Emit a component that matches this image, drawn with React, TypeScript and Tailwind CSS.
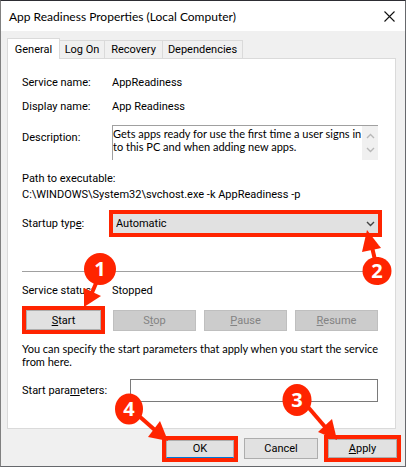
import type { ReactNode } from "react";
import clsx from "clsx";

type MarkerProps = {
  className: string;
  step: string;
  width: number;
  height: number;
  cx: number;
  cy: number;
  rx: number;
  ry: number;
  head: string;
  stem: string;
};

// Numbered callout: a disc with an arrow that points at the control
function Marker({ className, step, width, height, cx, cy, rx, ry, head, stem }: MarkerProps) {
  return (
    <svg
      className={clsx("pointer-events-none absolute z-10 max-w-none overflow-visible", className)}
      width={width}
      height={height}
      viewBox={`0 0 ${width} ${height}`}
      fill="#ff2400"
    >
      <path d={stem} stroke="#ff2400" strokeWidth="4" />
      <path d={head} />
      <ellipse cx={cx} cy={cy} rx={rx} ry={ry} />
      <text
        x={cx}
        y={cy + 7}
        textAnchor="middle"
        fill="#fff"
        className="font-['Open_Sans',sans-serif] text-[20px] font-bold"
      >
        {step}
      </text>
    </svg>
  );
}

const TABS = [
  { label: "Log On", width: "w-[45px]" },
  { label: "Recovery", width: "w-[58px]" },
  { label: "Dependencies", width: "w-[80px]" },
];

function Chevron({ up = false, className }: { up?: boolean; className?: string }) {
  return (
    <svg className={className} width="9" height="6" viewBox="0 0 9 6" fill="none" stroke="currentColor">
      <path d={up ? "M1 5L4.500 1.500L8 5" : "M1 1L4.500 4.500L8 1"} strokeWidth="1.400" />
    </svg>
  );
}

function Button({ children, disabled, className }: { children: ReactNode; disabled?: boolean; className?: string }) {
  return (
    <button
      type="button"
      disabled={disabled}
      className={clsx(
        "w-full border text-center",
        disabled ? "border-[#bfbfbf] bg-[#cccccc] text-[#838383]" : "border-[#adadad] bg-[#e1e1e1]",
        className,
      )}
    >
      {children}
    </button>
  );
}

export default function App() {
  return (
    <main className="border border-t-[#2d2d33] border-r-[#66686c] border-b-[#66686c] border-l-[#808080] bg-[#f0f0f0] font-[Roboto,Arial,sans-serif] text-[11px] leading-[13px] text-black">
      <header className="flex h-[30px] items-center justify-between bg-white pr-[10px] pl-2">
        <h1 className="font-[Lato,sans-serif] text-[12px]">App Readiness Properties (Local Computer)</h1>
        <button type="button" aria-label="Close">
          <svg width="11" height="11" viewBox="0 0 11 11" stroke="#111" strokeWidth="1.100">
            <path d="M.5.5l10 10M10.500.5l-10 10" />
          </svg>
        </button>
      </header>

      <div className="px-[6px] pt-[7px] pr-[9px]">
        <nav role="tablist" className="flex items-end">
          <button
            type="button"
            role="tab"
            aria-selected="true"
            className="relative -mb-px h-[21px] w-[53px] border border-b-0 border-[#dadada] bg-white"
          >
            General
          </button>
          {TABS.map((tab) => (
            <button
              key={tab.label}
              type="button"
              role="tab"
              aria-selected="false"
              className={clsx("h-[18px] border-t border-r border-[#dadada]", tab.width)}
            >
              {tab.label}
            </button>
          ))}
        </nav>

        <section className="border border-[#dadada] bg-white pt-[17px] pr-[17px] pb-[26px] pl-[14px]">
          <dl className="grid grid-cols-[90px_1fr] gap-y-[11px]">
            <dt>Service name:</dt>
            <dd>AppReadiness</dd>
            <dt>Display name:</dt>
            <dd>App Readiness</dd>
          </dl>

          <div className="mt-3 flex">
            <label htmlFor="description" className="w-[90px] pt-[6px]">
              Description:
            </label>
            <div className="flex h-[35px] flex-1 border-t border-l border-[#a0a0a0]">
              <textarea
                id="description"
                readOnly
                className="h-full min-w-0 flex-1 resize-none overflow-hidden bg-white pt-px font-[Lato,sans-serif] outline-none"
                defaultValue="Gets apps ready for use the first time a user signs in to this PC and when adding new apps."
              />
              <div className="flex w-4 flex-col items-center justify-around bg-[#f0f0f0] py-[3px] text-[#b8b8b8]">
                <Chevron up />
                <Chevron />
              </div>
            </div>
          </div>

          <p className="mt-3">Path to executable:</p>
          <p className="mt-[3px]">C:\WINDOWS\System32\svchost.exe -k AppReadiness -p</p>

          <div className="mt-[9px] flex items-center">
            <label htmlFor="startup" className="w-[87px]">
              Startup typ<u>e</u>:
            </label>
            <div className="relative -mr-1 flex-1 border-4 border-[#ff2400]">
              <select id="startup" className="block h-[19px] w-full appearance-none bg-[#e1e1e1] px-[3px] outline-none">
                <option>Automatic</option>
                <option>Manual</option>
                <option>Disabled</option>
              </select>
              <Chevron className="pointer-events-none absolute top-[7px] right-[3px] text-[#444]" />
              <Marker
                className="top-[16px] -right-[14px]"
                step="2"
                width={31}
                height={56}
                cx={16}
                cy={41}
                rx={14.5}
                ry={14}
                head="M6 0L20 18L1 22Z"
                stem="M11 17L14 30"
              />
            </div>
          </div>

          <hr className="mt-[34px] border-[#a0a0a0]" />

          <dl className="mt-3 grid grid-cols-[90px_1fr]">
            <dt>Service status:</dt>
            <dd>Stopped</dd>
          </dl>

          <div className="mt-[9px] grid grid-cols-4 items-center gap-x-2">
            <div className="relative border-4 border-[#ff2400]">
              <Button className="h-5">
                <u>S</u>tart
              </Button>
              <Marker
                className="-top-[57px] left-[58px]"
                step="1"
                width={34}
                height={54}
                cx={16}
                cy={16}
                rx={16}
                ry={16}
                head="M0 54L0 35L17 43Z"
                stem="M13 28L7 42"
              />
            </div>
            <Button disabled className="h-[21px]">
              S<u>t</u>op
            </Button>
            <Button disabled className="h-[21px]">
              <u>P</u>ause
            </Button>
            <Button disabled className="h-[21px]">
              <u>R</u>esume
            </Button>
          </div>

          <p className="mt-2 -mr-3 font-[Lato,sans-serif]">
            You can specify the start parameters that apply when you start the service from here.
          </p>

          <div className="mt-[11px] flex items-center">
            <label htmlFor="params" className="w-[108px]">
              Start para<u>m</u>eters:
            </label>
            <input id="params" type="text" className="h-[23px] min-w-0 flex-1 border border-[#7a7a7a] px-1 outline-none" />
          </div>
        </section>
      </div>

      <footer className="flex items-center justify-end gap-[6px] pt-[6px] pr-1 pb-1">
        <div className="relative w-[76px] border-4 border-[#ff2400]">
          <Button className="h-[18px] border-b-[#0078d7]">OK</Button>
          <Marker
            className="-top-[47px] -left-[52px]"
            step="4"
            width={54}
            height={48}
            cx={15}
            cy={16}
            rx={14}
            ry={15.5}
            head="M54 48L46 28L34 44Z"
            stem="M25 23L42 38"
          />
        </div>
        <Button className="h-[21px] max-w-[74px]">Cancel</Button>
        <div className="relative w-[77px] border-4 border-[#ff2400]">
          <Button className="h-[19px]">
            <u>A</u>pply
          </Button>
          <Marker
            className="-top-[56px] -left-[46px]"
            step="3"
            width={56}
            height={58}
            cx={15}
            cy={17}
            rx={14.5}
            ry={16}
            head="M55 57L50 36L36 49Z"
            stem="M26 24L44 45"
          />
        </div>
      </footer>
    </main>
  );
}
